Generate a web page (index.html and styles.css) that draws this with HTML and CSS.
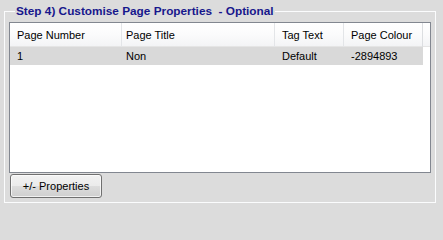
FILE: index.html
```html
<!DOCTYPE html>
<html>
<head>
<meta charset="utf-8">
<link rel="stylesheet" href="styles.css">
</head>
<body>
<fieldset class="group">
  <legend class="group-title">Step 4) Customise Page Properties&nbsp; - Optional</legend>
  <div class="listview">
    <div class="lv-header">
      <div class="hcell c1">Page Number</div>
      <div class="hcell c2">Page Title</div>
      <div class="hcell c3">Tag Text</div>
      <div class="hcell c4">Page Colour</div>
      <div class="hcell filler"></div>
    </div>
    <div class="lv-row selected">
      <div class="cell c1">1</div>
      <div class="cell c2">Non</div>
      <div class="cell c3">Default</div>
      <div class="cell c4">-2894893</div>
    </div>
  </div>
  <button class="btn">+/- Properties</button>
</fieldset>
</body>
</html>
```

FILE: styles.css
```css
html, body {
  margin: 0;
  padding: 0;
  background: #dcdcdc;
  width: 443px;
  height: 209px;
  overflow: hidden;
  font-family: "Liberation Sans", Arial, sans-serif;
  font-size: 11px;
  color: #000;
}

.group {
  box-sizing: border-box;
  margin: 5px 7px 0 4px;
  width: 432px;
  height: 198px;
  padding: 4px 4px 3px 4px;
  border: 1px solid #fbfcfd;
  min-width: 0;
}

.group-title {
  padding: 0 1px;
  margin-left: 6px;
  font-weight: bold;
  font-size: 11.8px;
  line-height: 13px;
  color: #17178c;
}

.listview {
  box-sizing: border-box;
  height: 151px;
  border: 1px solid #828790;
  background: #fff;
}

.lv-header {
  display: grid;
  grid-template-columns: 112px 153px 69px 79px 1fr;
  height: 24px;
  box-sizing: border-box;
  border-bottom: 1px solid #e5e5e5;
  background: linear-gradient(#ffffff, #fbfbfc 50%, #f3f4f6);
}

.hcell {
  box-sizing: border-box;
  border-right: 1px solid #e3e5e8;
  padding: 1px 0 0 7px;
  line-height: 23px;
  white-space: nowrap;
}

.hcell.c2 { padding-left: 4px; }
.hcell.filler { border-right: 0; margin-right: 7px; }
.lv-header .c4 { border-right: 1px solid #dcdee1; }

.lv-row {
  display: grid;
  grid-template-columns: 112px 153px 69px 79px;
  width: 413px;
  height: 18px;
}

.lv-row.selected { background: #d9d9d9; }

.cell {
  box-sizing: border-box;
  padding-left: 7px;
  line-height: 18px;
  white-space: nowrap;
}

.cell.c2 { padding-left: 4px; }

.btn {
  display: block;
  box-sizing: border-box;
  margin: 1px 0 0 1px;
  width: 92px;
  height: 24px;
  padding: 0;
  border: 1px solid #707070;
  border-radius: 3px;
  background: linear-gradient(#f2f2f2, #ebebeb 50%, #dddddd 50%, #cfcfcf);
  box-shadow: inset 0 0 0 1px rgba(255,255,255,0.7);
  font-family: "Liberation Sans", Arial, sans-serif;
  font-size: 11px;
  color: #000;
}
```
